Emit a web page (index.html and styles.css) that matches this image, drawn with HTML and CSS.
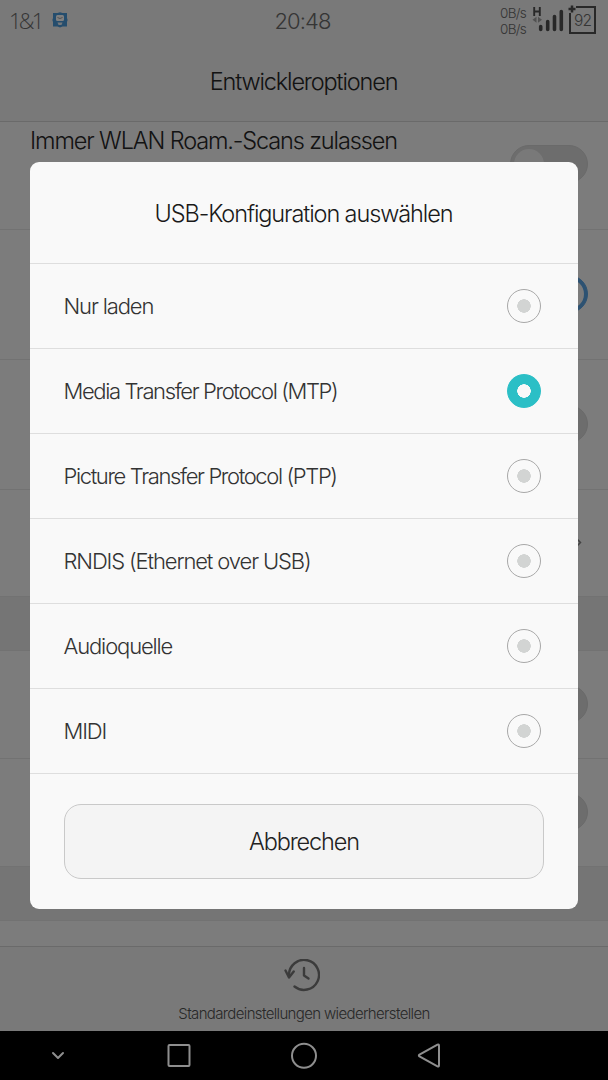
FILE: index.html
```html
<!DOCTYPE html>
<html lang="de">
<head>
    <meta charset="UTF-8">
    <meta name="viewport" content="width=device-width, initial-scale=1.0">
    <title>Entwickleroptionen</title>
    <link rel="stylesheet" href="styles.css">
</head>
<body>
    <div class="screen">
        <div class="settings">
            <div class="status-bar">
                <div class="status-left">
                    <span class="carrier">1&amp;1</span>
                    <svg class="mail-icon" width="16" height="16" viewBox="0 0 16 16">
                        <path d="M1 1h4.500L8 .3l2.500.7H15v5l.6 2-.6 2v4.500h-4.500L8 15.500l-2.500-1H1V10L.4 8 1 6z" fill="#4a9ada"/>
                        <rect x="4" y="3" width="8" height="6" rx="1.500" fill="#fff"/>
                        <path d="M5.500 5.500l2.500 1 2.500-1" fill="none" stroke="#888" stroke-width=".8"/>
                        <path d="M5.500 10.500h5l-1 2.500h-3z" fill="#e8f0f6"/>
                    </svg>
                </div>
                <span class="clock">20:48</span>
                <div class="status-right">
                    <div class="speed">
                        <span>0B/s</span>
                        <span>0B/s</span>
                    </div>
                    <svg width="32" height="26" viewBox="0 0 32 26">
                        <path d="M2.200 1v9M7.800 1v9M2 5.500h6" fill="none" stroke="#505050" stroke-width="1.900"/>
                        <path d="M4.500 10.800v6L.5 13.800zM6 10.800v6l4-3z" fill="#a2a2a2"/>
                        <path d="M8.700 20.500v3M15.700 15.500v8M22.500 10.500v13M29.300 5.500v18" stroke="#505050" stroke-width="3.600" stroke-linecap="round"/>
                    </svg>
                    <div class="battery">
                        <span>92</span>
                        <svg class="plus" width="8" height="8" viewBox="0 0 8 8">
                            <path d="M4 .5v7M.5 4h7" stroke="#505050" stroke-width="2.500"/>
                        </svg>
                    </div>
                </div>
            </div>
            <div class="title-bar">Entwickleroptionen</div>
            <div class="list">
                <div class="row roaming">
                    <span class="row-label">Immer WLAN Roam.-Scans zulassen</span>
                    <span class="switch"></span>
                </div>
                <div class="row tall"><span class="switch on"></span></div>
                <div class="row tall"><span class="switch"></span></div>
                <div class="row link">
                    <svg width="7" height="11" viewBox="0 0 7 11">
                        <path d="M1 1l4.500 4.500L1 10" fill="none" stroke="#868686" stroke-width="1.500"/>
                    </svg>
                </div>
                <div class="gap"></div>
                <div class="row"><span class="switch"></span></div>
                <div class="row"><span class="switch"></span></div>
                <div class="gap"></div>
            </div>
            <div class="restore">
                <svg width="36" height="34" viewBox="0 0 36 34">
                    <path d="M5 16a15 15 0 1 1 5.500 11.500" fill="none" stroke="#767676" stroke-width="2.400" stroke-linecap="round"/>
                    <path d="M1.500 11.500L5 18.500l4.700-6" fill="none" stroke="#767676" stroke-width="2.400" stroke-linecap="round" stroke-linejoin="round"/>
                    <path d="M20 9v7.500l4.500 3" fill="none" stroke="#767676" stroke-width="2.400" stroke-linecap="round" stroke-linejoin="round"/>
                </svg>
                <span>Standardeinstellungen wiederherstellen</span>
            </div>
            <div class="scrim"></div>
        </div>

        <div class="nav-bar">
            <svg class="nav-down" width="14" height="10" viewBox="0 0 14 10">
                <path d="M2 2l5 5 5-5" fill="none" stroke="#8e8e8e" stroke-width="2" stroke-linecap="round" stroke-linejoin="round"/>
            </svg>
            <svg class="nav-recent" width="26" height="26" viewBox="0 0 26 26">
                <rect x="2.500" y="2" width="21" height="21" rx="1" fill="none" stroke="#8e8e8e" stroke-width="2"/>
            </svg>
            <svg class="nav-home" width="28" height="28" viewBox="0 0 28 28">
                <circle cx="14" cy="13.700" r="12" fill="none" stroke="#8e8e8e" stroke-width="2"/>
            </svg>
            <svg class="nav-back" width="24" height="26" viewBox="0 0 24 26">
                <path d="M20.500 1.700q1.500-.8 1.500 1v19.600q0 1.800-1.500 1L2.500 13.500q-1.300-1 0-2z" fill="none" stroke="#8e8e8e" stroke-width="2"/>
            </svg>
        </div>

        <div class="dialog">
            <h2>USB-Konfiguration auswählen</h2>
            <label class="option"><span>Nur laden</span><input type="radio" name="usb"></label>
            <label class="option"><span class="tight">Media Transfer Protocol (MTP)</span><input type="radio" name="usb" checked></label>
            <label class="option"><span class="tight">Picture Transfer Protocol (PTP)</span><input type="radio" name="usb"></label>
            <label class="option"><span>RNDIS (Ethernet over USB)</span><input type="radio" name="usb"></label>
            <label class="option"><span>Audioquelle</span><input type="radio" name="usb"></label>
            <label class="option"><span>MIDI</span><input type="radio" name="usb"></label>
            <div class="actions">
                <button>Abbrechen</button>
            </div>
        </div>
    </div>
</body>
</html>
```
FILE: styles.css
```css
* {
    box-sizing: border-box;
    margin: 0;
    padding: 0;
}

body {
    font-family: Inter, 'Open Sans', sans-serif;
    font-weight: 300;
    color: #333;
}

svg {
    display: block;
    flex-shrink: 0;
}

.screen {
    position: relative;
    display: flex;
    flex-direction: column;
    width: 608px;
    height: 1080px;
    overflow: hidden;
    background: #000;
}

.settings {
    position: relative;
    display: flex;
    flex-direction: column;
    height: 1031px;
    background: #f2f2f2;
}

.scrim {
    position: absolute;
    inset: 0;
    background: rgba(0,0,0,0.5);
}

/* Status bar */
.status-bar {
    display: flex;
    height: 42px;
    padding: 0 12px 0 9px;
    color: #6a6a6a;
}

.status-left, .status-right {
    display: flex;
    flex: 1;
}

.status-left {
    align-items: center;
    gap: 11px;
}

.status-right {
    justify-content: flex-end;
    padding-top: 6px;
}

.carrier {
    margin-top: -2px;
    font-family: 'Open Sans', sans-serif;
    font-size: 22px;
    letter-spacing: -2.800px;
}

.mail-icon {
    margin-top: -2px;
}

.clock {
    font-size: 22px;
    line-height: 42px;
    letter-spacing: -0.900px;
}

.speed {
    display: flex;
    flex-direction: column;
    margin-right: 6px;
    font-size: 13.500px;
    line-height: 15.500px;
    letter-spacing: -0.700px;
}

.battery {
    position: relative;
    width: 27px;
    height: 28px;
    margin-left: 5px;
    border: 2px solid #505050;
    font-size: 15.500px;
    line-height: 25px;
    letter-spacing: -0.800px;
    text-align: center;
}

.plus {
    position: absolute;
    top: -3px;
    left: -3px;
    background: #f2f2f2;
}

.title-bar {
    height: 80px;
    border-bottom: 1px solid #d4d4d4;
    color: #262626;
    font-size: 23.500px;
    line-height: 80px;
    letter-spacing: -1.150px;
    text-indent: -1px;
    text-align: center;
}

/* Settings list */
.list {
    flex: 1;
    overflow: hidden;
    background: #f8f8f8;
}

.row {
    display: flex;
    align-items: center;
    justify-content: flex-end;
    height: 108px;
    padding: 0 20px 1px 30px;
    border-bottom: 1px solid #e4e4e4;
}

.row.tall {
    height: 130px;
}

.row.roaming {
    align-items: flex-start;
    justify-content: space-between;
}

.roaming .switch {
    margin-top: 23px;
}

.row.link {
    height: 107px;
    padding-right: 26px;
}

.row-label {
    color: #262626;
    font-size: 23.500px;
    line-height: 37px;
    letter-spacing: -1.130px;
    white-space: nowrap;
}

.switch {
    width: 78px;
    height: 38px;
    border: 1px solid #d4d4d4;
    border-radius: 19px;
    background: #dadada;
}

.switch::before {
    content: '';
    display: block;
    width: 30px;
    height: 30px;
    margin: 3px;
    border-radius: 50%;
    background: #f2f2f2;
}

.switch.on {
    border-color: #5aa4e4;
    background: #5aa4e4;
}

.switch.on::before {
    margin-left: auto;
    background: #f8f8f8;
}

.gap {
    height: 54px;
    border-bottom: 1px solid #e4e4e4;
    background: #ebebeb;
}

.restore {
    display: flex;
    flex-direction: column;
    align-items: center;
    height: 85px;
    padding-top: 12px;
    border-top: 1px solid #d4d4d4;
    color: #505050;
    font-size: 15px;
    line-height: 20px;
    letter-spacing: -0.640px;
}

.restore svg {
    margin: 0 5px 11px 0;
}

/* Navigation bar */
.nav-bar {
    display: flex;
    align-items: center;
    height: 49px;
    padding-left: 51px;
}

.nav-recent {
    margin-left: 101px;
}

.nav-home {
    margin-left: 98px;
}

.nav-back {
    margin-left: 99px;
}

/* Dialog */
.dialog {
    position: absolute;
    top: 162px;
    left: 30px;
    width: 548px;
    height: 747px;
    border-radius: 9px;
    background: #f9f9f9;
}

h2 {
    height: 101px;
    color: #1a1a1a;
    font-size: 23.500px;
    font-weight: 300;
    line-height: 103px;
    letter-spacing: -1.100px;
    text-indent: -1px;
    text-align: center;
}

.option {
    display: flex;
    align-items: center;
    justify-content: space-between;
    height: 85px;
    padding: 0 37.500px 0 33.500px;
    border-top: 1px solid #dedede;
    font-size: 22px;
    line-height: 30px;
    letter-spacing: -1.130px;
    color: #333;
    cursor: pointer;
}

.option .tight {
    letter-spacing: -1.370px;
}

.option input {
    appearance: none;
    width: 34px;
    height: 34px;
    border: 1px solid #a8a8a8;
    border-radius: 50%;
    background: radial-gradient(circle, #d2d4d3 6.500px, #f9f9f9 7px);
}

.option input:checked {
    border-color: #2bbfc6;
    background: radial-gradient(circle, #f9f9f9 6.500px, #2bbfc6 7px);
}

.actions {
    padding: 30px 34px;
    border-top: 1px solid #dedede;
}

button {
    width: 100%;
    height: 75px;
    border: 1px solid #c9c9c9;
    border-radius: 17px;
    background: #f4f4f4;
    color: #222;
    font-family: inherit;
    font-size: 23.500px;
    font-weight: 300;
    letter-spacing: -1.130px;
}
```
